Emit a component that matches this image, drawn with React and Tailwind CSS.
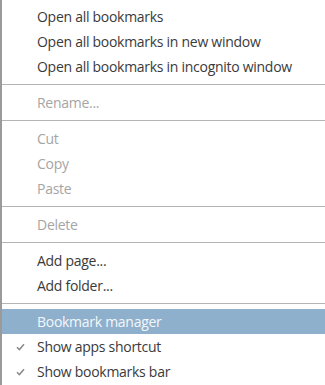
const items = [
  { label: 'Open all bookmarks' },
  { label: 'Open all bookmarks in new window' },
  { label: 'Open all bookmarks in incognito window' },
  { sep: true },
  { label: 'Rename...', disabled: true },
  { sep: true },
  { label: 'Cut', disabled: true },
  { label: 'Copy', disabled: true },
  { label: 'Paste', disabled: true },
  { sep: true },
  { label: 'Delete', disabled: true },
  { sep: true },
  { label: 'Add page...' },
  { label: 'Add folder...' },
  { sep: true },
  { label: 'Bookmark manager', active: true },
  { label: 'Show apps shortcut', checked: true },
  { label: 'Show bookmarks bar', checked: true },
];

function Check() {
  return (
    <svg width="9" height="8" viewBox="0 0 9 8" className="text-[#8a8a8a]">
      <path d="M1 4.2 L3.4 6.6 L8 1.2" fill="none" stroke="currentColor" strokeWidth="1.5" />
    </svg>
  );
}

export default function App() {
  return (
    <div className="w-[325px] h-[385px] bg-white border-l-2 border-[#9a9a9a] pt-[4px] font-['Open_Sans',sans-serif] text-[14px] overflow-hidden">
      {items.map((it, i) =>
        it.sep ? (
          <div key={i} className="py-[5px]">
            <div className="h-px bg-[#b4b4b4]" />
          </div>
        ) : (
          <div
            key={i}
            className={
              'h-[25px] flex items-center ' +
              (it.active ? 'bg-[#8fb0cd] text-[#f4f7fa]' : it.disabled ? 'text-[#a5a5a5]' : 'text-[#3a3a3a]')
            }
          >
            <div className="w-[35px] flex justify-center pl-[2px]">{it.checked && <Check />}</div>
            <span className="tracking-[-0.28px]">{it.label}</span>
          </div>
        )
      )}
    </div>
  );
}
